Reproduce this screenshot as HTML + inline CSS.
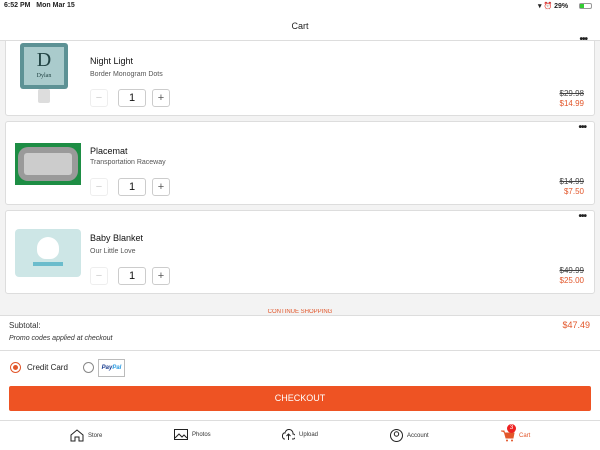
<!DOCTYPE html>
<html><head><style>
*{margin:0;padding:0;box-sizing:border-box}
body{width:600px;height:450px;overflow:hidden;background:#f3f3f3;font-family:"Liberation Sans",sans-serif;position:relative;color:#222}
.abs{position:absolute}
.card{position:absolute;left:5px;width:590px;background:#fff;border:1px solid #ddd;border-radius:3px}
.t{position:absolute;left:84px;font-size:9px;color:#111}
.s{position:absolute;left:84px;font-size:7px;color:#555}
.qb{position:absolute;width:18px;height:18px;border:1px solid #ccc;border-radius:3px;font-size:11px;text-align:center;line-height:16px;color:#555;background:#fff}
.old{position:absolute;right:10px;font-size:8px;color:#444;text-decoration:line-through}
.new{position:absolute;right:10px;font-size:8px;color:#e2562a}
.dots{position:absolute;right:8px;font-size:10px;font-weight:bold;letter-spacing:-1px;color:#222}
.tab{position:absolute;top:429px;font-size:6px;color:#333;display:flex;align-items:center;gap:4px}
</style></head><body>

<div class="card" style="top:30px;height:86px">
<div class="abs" style="left:14px;top:12px;width:48px;height:46px;background:#5d9295;border-radius:3px;padding:4px"><div style="background:#aacbcc;width:100%;height:100%;text-align:center;font-family:'Liberation Serif',serif;color:#244;font-size:20px;line-height:26px">D<div style="font-size:6px;line-height:6px">Dylan</div></div></div>
<div class="abs" style="left:32px;top:58px;width:12px;height:14px;background:#ddd;border-radius:2px"></div>
<div class="t" style="top:25px">Night Light</div><div class="s" style="top:40px">Border Monogram Dots</div>
<div class="qb" style="left:84px;top:58px;color:#ccc;border-color:#eee">−</div><div class="qb" style="left:112px;top:58px;width:28px;color:#111">1</div><div class="qb" style="left:146px;top:58px">+</div>
<div class="old" style="top:58px">$29.98</div><div class="new" style="top:68px">$14.99</div>
</div>
<div class="abs" style="left:0;top:0;width:600px;height:41px;background:#fff;border-bottom:1px solid #ddd"></div>
<div class="abs" style="right:13px;top:34px;font-size:10px;font-weight:bold;letter-spacing:-1px">•••</div>
<div class="abs" style="left:4px;top:2px;font-size:7px;font-weight:bold">6:52 PM&nbsp;&nbsp;&nbsp;Mon Mar 15</div>
<div class="abs" style="left:538px;top:2px;font-size:7px;font-weight:bold">▾ ⏰ 29%</div>
<div class="abs" style="left:579px;top:3px;width:13px;height:6px;border:1px solid #999;border-radius:2px"><div style="width:4px;height:4px;background:#3c3"></div></div>
<div class="abs" style="left:0;width:600px;top:21px;text-align:center;font-size:9px">Cart</div>

<div class="card" style="top:121px;height:84px">
<div class="abs" style="left:9px;top:21px;width:66px;height:42px;background:#1d8d44;padding:4px 3px"><div style="width:100%;height:100%;background:#9a9a9a;border-radius:10px;padding:6px"><div style="width:100%;height:100%;background:#ccc;border-radius:3px"></div></div></div>
<div class="t" style="top:24px">Placemat</div><div class="s" style="top:37px">Transportation Raceway</div>
<div class="qb" style="left:84px;top:56px;color:#ccc;border-color:#eee">−</div><div class="qb" style="left:112px;top:56px;width:28px;color:#111">1</div><div class="qb" style="left:146px;top:56px">+</div>
<div class="old" style="top:55px">$14.99</div><div class="new" style="top:65px">$7.50</div><div class="dots" style="top:0px">•••</div>
</div>

<div class="card" style="top:210px;height:84px">
<div class="abs" style="left:9px;top:18px;width:66px;height:48px;background:#cde6e6;border-radius:4px"><div style="position:absolute;left:22px;top:8px;width:22px;height:22px;background:#fff;border-radius:50% 50% 40% 40%"></div><div style="position:absolute;left:18px;top:33px;width:30px;height:4px;background:#6bbccc"></div></div>
<div class="t" style="top:22px">Baby Blanket</div><div class="s" style="top:37px">Our Little Love</div>
<div class="qb" style="left:84px;top:56px;color:#ccc;border-color:#eee">−</div><div class="qb" style="left:112px;top:56px;width:28px;color:#111">1</div><div class="qb" style="left:146px;top:56px">+</div>
<div class="old" style="top:55px">$49.99</div><div class="new" style="top:65px">$25.00</div><div class="dots" style="top:0px">•••</div>
</div>

<div class="abs" style="left:0;top:309px;width:600px;text-align:center;font-size:6px;color:#e2562a;height:6px;overflow:hidden">CONTINUE SHOPPING</div>
<div class="abs" style="left:0;top:315px;width:600px;height:135px;background:#fff;border-top:1px solid #ddd"></div>
<div class="abs" style="left:9px;top:321px;font-size:8px;color:#333">Subtotal:</div>
<div class="abs" style="right:10px;top:320px;font-size:9px;color:#e2562a">$47.49</div>
<div class="abs" style="left:9px;top:335px;font-size:7px;font-style:italic;color:#333">Promo codes applied at checkout</div>
<div class="abs" style="left:0;top:350px;width:600px;border-top:1px solid #ddd"></div>
<div class="abs" style="left:10px;top:362px;width:11px;height:11px;border-radius:50%;border:1px solid #e2562a;padding:2px"><div style="width:100%;height:100%;background:#e2562a;border-radius:50%"></div></div>
<div class="abs" style="left:27px;top:363px;font-size:8px">Credit Card</div>
<div class="abs" style="left:83px;top:362px;width:11px;height:11px;border-radius:50%;border:1px solid #888"></div>
<div class="abs" style="left:98px;top:359px;width:27px;height:18px;border:1px solid #bbb;font-size:6px;font-style:italic;font-weight:bold;color:#1a3d8f;text-align:center;line-height:16px">Pay<span style="color:#2a9ae0">Pal</span></div>
<div class="abs" style="left:9px;top:386px;width:582px;height:25px;background:#ee5323;border-radius:2px;color:#fff;font-size:9px;text-align:center;line-height:25px">CHECKOUT</div>
<div class="abs" style="left:0;top:420px;width:600px;border-top:1px solid #ddd"></div>
<div class="tab" style="left:70px"><svg width="14" height="13" viewBox="0 0 14 13"><path d="M1 6L7 1L13 6V12H9V8H5V12H1Z" fill="none" stroke="#222"/></svg>Store</div>
<div class="tab" style="left:174px"><svg width="14" height="11"><rect x=".5" y=".5" width="13" height="10" fill="none" stroke="#222"/><path d="M1 9L5 5L8 8L10 6L13 9" fill="none" stroke="#222"/></svg>Photos</div>
<div class="tab" style="left:282px"><svg width="13" height="12"><path d="M3 10H2A2 3 0 0 1 3 4A4 4 0 0 1 11 5A2 2 0 0 1 11 10H10M6.5 11V5M4.5 7L6.5 5L8.5 7" fill="none" stroke="#222"/></svg>Upload</div>
<div class="tab" style="left:390px"><svg width="13" height="13"><circle cx="6.5" cy="6.5" r="6" fill="none" stroke="#222"/><circle cx="6.5" cy="5" r="2.2" fill="none" stroke="#222"/></svg>Account</div>
<div class="tab" style="left:501px;color:#e2562a"><svg width="14" height="13"><path d="M0 2H3L5 9H12L13 4H4" fill="#e2562a" stroke="#e2562a"/><circle cx="6" cy="11.5" r="1" fill="#e2562a"/><circle cx="11" cy="11.5" r="1" fill="#e2562a"/></svg>Cart</div>
<div class="abs" style="left:507px;top:424px;width:9px;height:9px;border-radius:50%;background:#e22;color:#fff;font-size:6px;text-align:center;line-height:9px">3</div>
</body></html>
